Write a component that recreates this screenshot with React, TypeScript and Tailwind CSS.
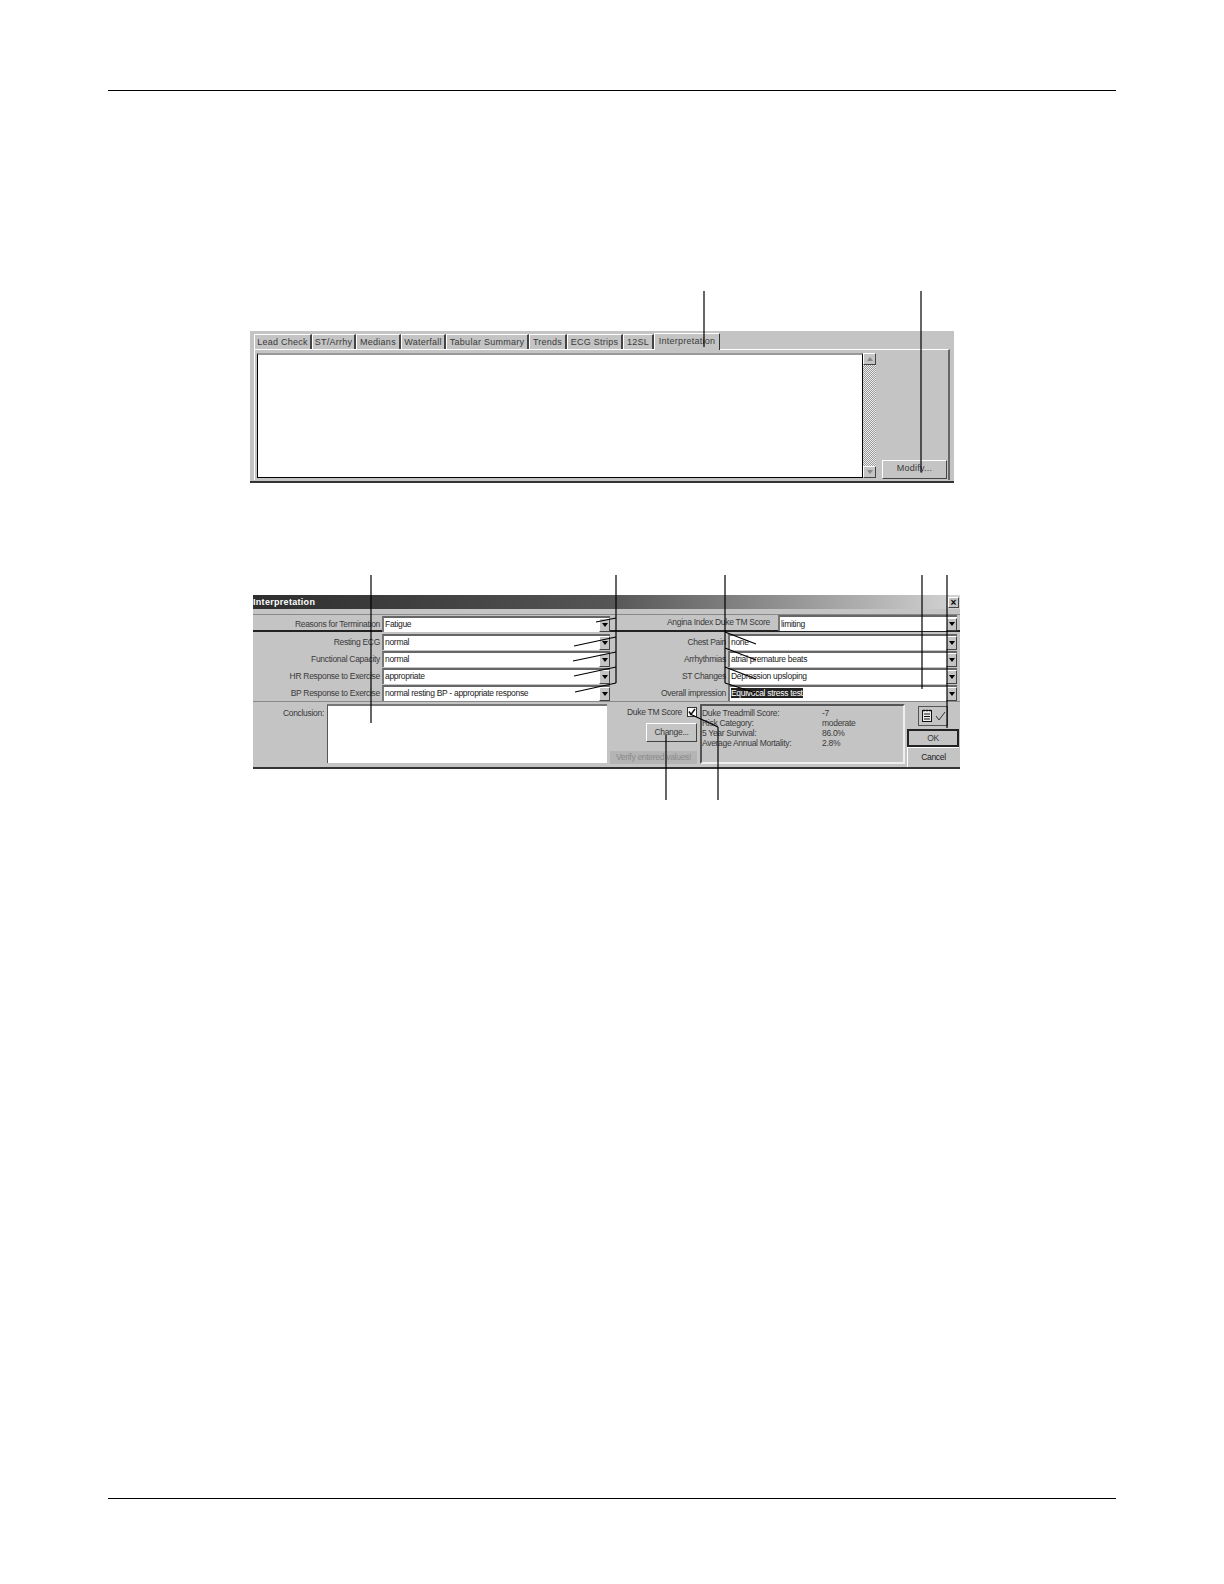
const font = "font-['Liberation_Sans',Arial,sans-serif]";

const tabs = [
  { label: 'Lead Check', w: 'w-[58px]' },
  { label: 'ST/Arrhy', w: 'w-[44px]' },
  { label: 'Medians', w: 'w-[45px]' },
  { label: 'Waterfall', w: 'w-[45px]' },
  { label: 'Tabular Summary', w: 'w-[83px]' },
  { label: 'Trends', w: 'w-[38px]' },
  { label: 'ECG Strips', w: 'w-[56px]' },
  { label: '12SL', w: 'w-[31px]' },
];

const leftRows = [
  { label: 'Resting ECG', value: 'normal' },
  { label: 'Functional Capacity', value: 'normal' },
  { label: 'HR Response to Exercise', value: 'appropriate' },
  { label: 'BP Response to Exercise', value: 'normal resting BP - appropriate response' },
];

const rightRows = [
  { label: 'Chest Pain', value: 'none' },
  { label: 'Arrhythmias', value: 'atrial premature beats' },
  { label: 'ST Changes', value: 'Depression upsloping' },
  { label: 'Overall impression', value: 'Equivocal stress test', selected: true },
];

const raised = 'border border-t-white border-l-white border-r-[#444] border-b-[#444]';

function Arrow() {
  return <div className="w-0 h-0 border-l-[3px] border-r-[3px] border-t-[4px] border-l-transparent border-r-transparent border-t-black" />;
}

function Combo({ value, selected, className }: { value: string; selected?: boolean; className?: string }) {
  return (
    <div className={`flex h-[16px] bg-white border-t-2 border-l-2 border-t-[#666] border-l-[#777] ${className}`}>
      <div className="flex-1 pl-[1px] leading-[13px] text-[#222] whitespace-nowrap">
        {selected ? <span className="bg-[#222] text-white">{value}</span> : value}
      </div>
      <div className={`w-[11px] flex items-center justify-center bg-[#c4c4c4] ${raised}`}>
        <Arrow />
      </div>
    </div>
  );
}

function Row({ label, value, labelW, selected }: { label: string; value: string; labelW: string; selected?: boolean }) {
  return (
    <div className="flex items-center h-[17px]">
      <div className={`${labelW} shrink-0 text-right pr-[2px] pt-[1px] text-[#3a3a3a] whitespace-nowrap`}>{label}</div>
      <Combo value={value} selected={selected} className="flex-1" />
    </div>
  );
}

function FirstPanel() {
  return (
    <div className="ml-[142px] mt-[240px] w-[704px] h-[152px] bg-[#c4c4c4] border-b-2 border-b-[#333] pt-[3px] px-[4px] text-[9px] tracking-[0.25px] text-[#3a3a3a]">
      <div className="flex h-[15px] items-end">
        {tabs.map(t => (
          <div key={t.label} className={`${t.w} h-[15px] text-center leading-[14px] border-t border-l border-t-white border-l-white border-r-2 border-r-[#444] whitespace-nowrap`}>
            {t.label}
          </div>
        ))}
        <div className="w-[66px] h-[17px] -mb-[1px] text-center leading-[14px] bg-[#c4c4c4] border-t border-l border-t-white border-l-white border-r border-r-[#333] relative whitespace-nowrap">
          Interpretation
        </div>
      </div>
      <div className="flex h-[131px] w-[696px] border-t border-l border-t-white border-l-white border-r-2 border-r-[#666] pt-[3px] pl-[2px]">
        <div className="w-[606px] h-[125px] bg-white border-t-2 border-t-[#999] border-l border-r border-b border-black" />
        <div className="w-[13px] h-[125px] flex flex-col bg-[repeating-conic-gradient(#999_0%_25%,#eee_0%_50%)] bg-[length:2px_2px]">
          <div className={`h-[12px] bg-[#c4c4c4] flex items-center justify-center ${raised}`}>
            <div className="w-0 h-0 border-l-[3px] border-r-[3px] border-b-[4px] border-l-transparent border-r-transparent border-b-[#888]" />
          </div>
          <div className="flex-1" />
          <div className={`h-[12px] bg-[#c4c4c4] flex items-center justify-center ${raised}`}>
            <div className="w-0 h-0 border-l-[3px] border-r-[3px] border-t-[4px] border-l-transparent border-r-transparent border-t-[#888]" />
          </div>
        </div>
        <div className="flex-1 flex flex-col justify-end items-end pr-[1px] pb-[1px]">
          <div className={`w-[65px] h-[19px] text-center leading-[15px] bg-[#c4c4c4] ${raised}`}>Modify...</div>
        </div>
      </div>
    </div>
  );
}

function SecondPanel() {
  return (
    <div className="ml-[145px] mt-[112px] w-[707px] h-[174px] bg-[#c4c4c4] text-[8.5px] tracking-[-0.3px] border-b-2 border-b-[#333]">
      <div className="h-[14px] flex items-center justify-between bg-gradient-to-r from-[#2e2e2e] via-[#555] to-[#d4d4d4]">
        <div className="text-white font-bold text-[9px] tracking-[0.3px] leading-[14px]">Interpretation</div>
        <div className={`w-[11px] h-[11px] mr-[1px] bg-[#c4c4c4] text-black font-bold text-[10px] tracking-normal leading-[9px] text-center ${raised}`}>×</div>
      </div>
      <div className="mt-[5px] flex h-[18px] border-b-2 border-b-[#222] border-t border-t-[#888]">
        <div className="w-[362px] pr-[5px]">
          <Row label="Reasons for Termination" value="Fatigue" labelW="w-[129px]" />
        </div>
        <div className="flex-1 flex items-center pr-[3px]">
          <div className="w-[163px] pr-[8px] shrink-0 text-right text-[#3a3a3a] whitespace-nowrap">Angina Index Duke TM Score</div>
          <Combo value="limiting" className="flex-1 pt-[1px]" />
        </div>
      </div>
      <div className="flex h-[70px] pt-[1px] border-b border-b-[#888]">
        <div className="w-[362px] pr-[5px] flex flex-col">
          {leftRows.map(r => <Row key={r.label} label={r.label} value={r.value} labelW="w-[129px]" />)}
        </div>
        <div className="flex-1 flex flex-col pr-[3px]">
          {rightRows.map(r => <Row key={r.label} label={r.label} value={r.value} selected={r.selected} labelW="w-[113px]" />)}
        </div>
      </div>
      <div className="flex h-[65px] pt-[2px]">
        <div className="w-[74px] shrink-0 text-right pr-[3px] pt-[3px] text-[#3a3a3a]">Conclusion:</div>
        <div className="w-[280px] shrink-0 h-[59px] bg-white border-t-2 border-l border-t-[#777] border-l-[#555]" />
        <div className="w-[93px] shrink-0 pl-[3px]">
          <div className="flex items-center justify-end pt-[2px] pr-[3px] text-[#3a3a3a] whitespace-nowrap">
            <span className="mr-[2px]">Duke TM Score</span>
            <div className="ml-[3px] w-[10px] h-[10px] bg-white border border-[#333] shrink-0 flex items-center justify-center">
              <svg width="8" height="8" viewBox="0 0 8 8" fill="none" stroke="#111" strokeWidth="1.5">
                <path d="M1 3.5l2 3 4-5.5" />
              </svg>
            </div>
          </div>
          <div className={`ml-[36px] mt-[4px] w-[51px] h-[19px] text-center leading-[16px] text-[#3a3a3a] ${raised}`}>Change...</div>
          <div className="mt-[9px] w-[87px] h-[13px] bg-[#b4b4b4] text-center leading-[13px] text-[#8a8a8a] whitespace-nowrap">Verify entered values!</div>
        </div>
        <div className="w-[205px] shrink-0 h-[60px] border-2 border-t-[#555] border-l-[#555] border-r-[#eee] border-b-[#eee] text-[#3a3a3a] leading-[10px]">
          <div className="grid grid-cols-[120px_1fr] pt-[2px]">
            <span>Duke Treadmill Score:</span><span>-7</span>
            <span>Risk Category:</span><span>moderate</span>
            <span>5 Year Survival:</span><span>86.0%</span>
            <span>Average Annual Mortality:</span><span>2.8%</span>
          </div>
        </div>
        <div className="flex-1 flex flex-col items-center pl-[2px] pr-[1px]">
          <div className="mt-[2px] w-[30px] h-[20px] flex items-center justify-center gap-[2px] bg-[#c4c4c4] border border-[#555]">
            <svg width="12" height="14" viewBox="0 0 12 14" fill="none" stroke="#111" strokeWidth="1">
              <rect x="1.5" y="1.5" width="9" height="11" fill="#eee" />
              <path d="M3 0.5v2M6 0.5v2M9 0.5v2M3 5h6M3 7.5h6M3 10h6" />
            </svg>
            <svg width="11" height="10" viewBox="0 0 11 10" fill="none" stroke="#333" strokeWidth="1">
              <path d="M1 5l3 4 6-8" />
            </svg>
          </div>
          <div className="mt-[3px] w-full h-[18px] text-center leading-[15px] text-[#3a3a3a] border-2 border-[#222] bg-[#c4c4c4]">OK</div>
          <div className="w-full flex-1 text-center leading-[19px] text-[#222] border-t border-l border-t-white border-l-white">Cancel</div>
        </div>
      </div>
    </div>
  );
}

// callout lines over the screenshots
function Callouts() {
  const lines = [
    [704, 291, 704, 347], [921, 291, 921, 472],
    [371, 575, 371, 723],
    [616, 575, 616, 683], [596, 622, 616, 618], [574, 646, 616, 637], [573, 661, 616, 652], [574, 676, 616, 667], [575, 692, 616, 683],
    [725, 575, 725, 683], [725, 632, 756, 644], [725, 648, 756, 660], [725, 667, 756, 679], [725, 683, 756, 693],
    [922, 575, 922, 689], [947, 575, 947, 728],
    [666, 735, 666, 800], [718, 727, 718, 800], [718, 727, 690, 714],
  ];
  return (
    <svg className="absolute left-0 top-0 pointer-events-none" width="1224" height="1584" stroke="#000" strokeWidth="1.2" fill="none">
      {lines.map((l, i) => <line key={i} x1={l[0]} y1={l[1]} x2={l[2]} y2={l[3]} />)}
    </svg>
  );
}

export default function App() {
  return (
    <div className={`relative w-[1224px] h-[1584px] bg-white overflow-hidden ${font}`}>
      <div className="pt-[90px] pl-[108px] w-[1116px]">
        <div className="h-[1px] bg-black" />
        <FirstPanel />
        <SecondPanel />
        <div className="mt-[729px] h-[1px] bg-black" />
      </div>
      <Callouts />
    </div>
  );
}
